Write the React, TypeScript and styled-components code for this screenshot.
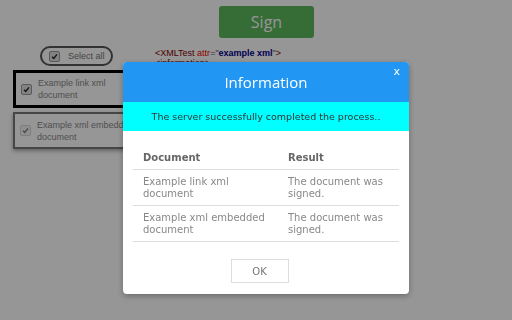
import React from "react";
import styled, { createGlobalStyle } from "styled-components";

const Global = createGlobalStyle`
  html, body { margin: 0; padding: 0; background: #fff; }
  body { font-family: "DejaVu Sans", Verdana, sans-serif; width: 512px; height: 320px; overflow: hidden; }
`;

const Page = styled.div`
  width: 512px;
  height: 320px;
  padding: 6px 0 0 13px;
  box-sizing: border-box;
`;

const TopBar = styled.div`
  display: flex;
  padding-left: 206px;
`;

const SignButton = styled.button`
  width: 95px;
  height: 32px;
  border: none;
  border-radius: 3px;
  background: #5cb85c;
  color: #fff;
  font-family: "Open Sans", sans-serif;
  font-size: 16px;
  cursor: pointer;
`;

const Columns = styled.div`
  display: flex;
  gap: 6px;
  margin-top: 8px;
`;

const LeftCol = styled.div`
  width: 136px;
  display: flex;
  flex-direction: column;
  align-items: flex-start;
  font-family: "Liberation Sans", Arial, sans-serif;
`;

const SelectAll = styled.div`
  margin-left: 27px;
  width: 62px;
  height: 16px;
  border: 2px solid #555;
  border-radius: 10px;
  display: flex;
  align-items: center;
  gap: 8px;
  padding-left: 7px;
  font-size: 9px;
  color: #777;
  margin-bottom: 4px;
`;

const Box = styled.div<{ $selected?: boolean }>`
  width: 100%;
  box-sizing: border-box;
  height: ${(p) => (p.$selected ? 38 : 37)}px;
  border: ${(p) => (p.$selected ? "3px solid #000" : "2px solid #777")};
  box-shadow: ${(p) => (p.$selected ? "none" : "0 2px 4px rgba(0,0,0,0.35)")};
  display: flex;
  align-items: center;
  gap: 6px;
  padding-left: 5px;
  margin-bottom: 4px;
  font-size: 9px;
  line-height: 12px;
  color: #888;
`;

const Check = styled.span<{ $disabled?: boolean }>`
  width: 9px;
  height: 9px;
  flex: none;
  border-radius: 2px;
  border: 1px solid ${(p) => (p.$disabled ? "#bbb" : "#999")};
  background: ${(p) => (p.$disabled ? "#eee" : "#ddd")};
  display: flex;
  align-items: center;
  justify-content: center;
  opacity: ${(p) => (p.$disabled ? 0.6 : 1)};
  svg { display: block; }
`;

const Xml = styled.div`
  padding-top: 2px;
  font-family: "Liberation Sans", Arial, sans-serif;
  font-size: 9px;
  line-height: 10px;
  color: #555;
`;

const Tag = styled.span`
  color: #800000;
`;
const Attr = styled.span`
  color: #e00;
`;
const Val = styled.span`
  color: #00008b;
  font-weight: bold;
`;

const Overlay = styled.div`
  position: fixed;
  inset: 0;
  background: rgba(0, 0, 0, 0.41);
`;

const Modal = styled.div`
  position: fixed;
  left: 123px;
  top: 62px;
  width: 286px;
  height: 232px;
  background: #fff;
  border-radius: 4px;
  overflow: hidden;
  box-shadow: 0 2px 6px rgba(0, 0, 0, 0.3);
  display: flex;
  flex-direction: column;
`;

const Header = styled.div`
  position: relative;
  height: 40px;
  background: #2196f3;
  color: #fff;
  display: flex;
  align-items: center;
  justify-content: center;
  font-family: "Open Sans", sans-serif;
  font-size: 15px;
`;

const Close = styled.span`
  position: absolute;
  right: 9px;
  top: 3px;
  font-size: 11px;
  font-family: "DejaVu Sans", sans-serif;
  color: #fff;
`;

const Notice = styled.div`
  height: 29px;
  background: #00ffff;
  color: #333;
  font-size: 9.5px;
  display: flex;
  align-items: center;
  justify-content: center;
`;

const Body = styled.div`
  padding: 18px 10px 0;
  display: flex;
  flex-direction: column;
  align-items: center;
`;

const Table = styled.table`
  width: 266px;
  border-collapse: collapse;
  font-size: 10px;
  color: #888;
  th, td {
    text-align: left;
    padding: 0 10px;
    line-height: 12px;
  }
  th {
    font-weight: bold;
    color: #666;
    padding-top: 3px;
    padding-bottom: 5px;
    border-bottom: 1px solid #ddd;
  }
  td {
    height: 35px;
    border-bottom: 1px solid #ddd;
    vertical-align: middle;
  }
  th:first-child, td:first-child { width: 125px; }
`;

const OkButton = styled.button`
  margin: 17px 13px 0 0;
  width: 58px;
  height: 24px;
  background: #fff;
  border: 1px solid #ddd;
  color: #777;
  font-family: "DejaVu Sans", sans-serif;
  font-size: 10px;
`;

const Tick = () => (
  <svg width="7" height="7" viewBox="0 0 10 10">
    <path d="M1.5 5.2 L4 7.8 L8.5 2" stroke="#222" strokeWidth="2" fill="none" />
  </svg>
);

export default function App() {
  return (
    <>
      <Global />
      <Page>
        <TopBar>
          <SignButton>Sign</SignButton>
        </TopBar>
        <Columns>
          <LeftCol>
            <SelectAll>
              <Check>
                <Tick />
              </Check>
              Select all
            </SelectAll>
            <Box $selected>
              <Check>
                <Tick />
              </Check>
              <span>
                Example link xml
                <br />
                document
              </span>
            </Box>
            <Box>
              <Check $disabled>
                <Tick />
              </Check>
              <span>
                Example xml embedded
                <br />
                document
              </span>
            </Box>
          </LeftCol>
          <Xml>
            <Tag>&lt;XMLTest </Tag>
            <Attr>attr</Attr>=&quot;<Val>example xml</Val>&quot;<Tag>&gt;</Tag>
            <br />
            <Tag>&lt;information&gt;</Tag>
          </Xml>
        </Columns>
      </Page>
      <Overlay />
      <Modal>
        <Header>
          Information
          <Close>x</Close>
        </Header>
        <Notice>The server successfully completed the process..</Notice>
        <Body>
          <Table>
            <thead>
              <tr>
                <th>Document</th>
                <th>Result</th>
              </tr>
            </thead>
            <tbody>
              <tr>
                <td>Example link xml document</td>
                <td>The document was signed.</td>
              </tr>
              <tr>
                <td>Example xml embedded document</td>
                <td>The document was signed.</td>
              </tr>
            </tbody>
          </Table>
          <OkButton>OK</OkButton>
        </Body>
      </Modal>
    </>
  );
}
